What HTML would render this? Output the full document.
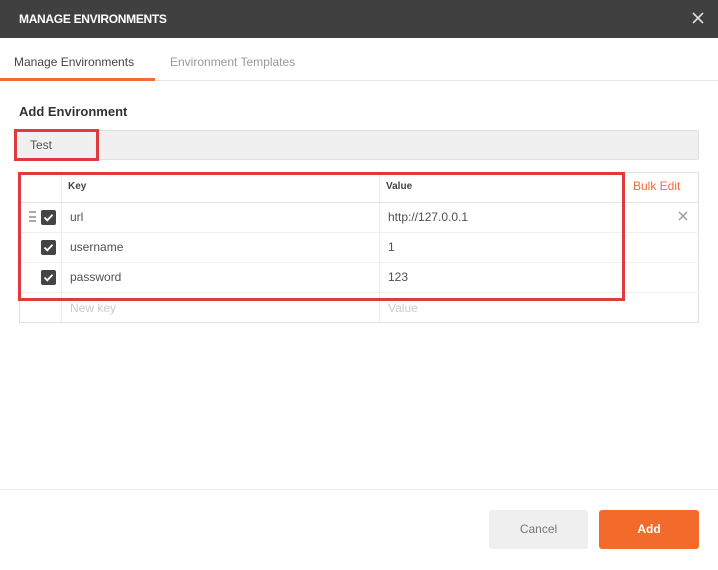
<!DOCTYPE html>
<html><head><meta charset="utf-8"><style>
*{box-sizing:border-box;margin:0;padding:0}
body{width:718px;height:570px;background:#fff;font-family:"Liberation Sans",sans-serif;position:relative;overflow:hidden;font-size:12px;color:#505050}
.a{position:absolute}
.hdr{left:0;top:0;width:718px;height:38px;background:#404040;color:#fff;font-size:12px;font-weight:bold;line-height:38px;padding-left:19px;letter-spacing:-0.3px}
.cell{font-size:12px;color:#505050}
.hl{height:1px;background:#e3e3e3}
.vl{width:1px;background:#ececec}
</style></head><body>
<div class="a hdr">MANAGE ENVIRONMENTS</div>
<svg class="a" style="left:691px;top:11px" width="14" height="14"><path d="M2 2L12 12M12 2L2 12" stroke="#ddd" stroke-width="1.6"/></svg>
<div class="a" style="left:14px;top:55px;font-size:12px;color:#444">Manage Environments</div>
<div class="a" style="left:170px;top:55px;font-size:12px;color:#999">Environment Templates</div>
<div class="a" style="left:0;top:80px;width:718px;height:1px;background:#e3e3e3"></div>
<div class="a" style="left:0;top:78px;width:155px;height:3px;background:#f26b3a"></div>
<div class="a" style="left:19px;top:104px;font-size:13px;font-weight:bold;color:#333">Add Environment</div>
<div class="a" style="left:14px;top:130px;width:685px;height:30px;background:#f0f0f0;border:1px solid #e0e0e0;border-radius:2px"></div>
<div class="a" style="left:30px;top:138px;color:#555">Test</div>
<div class="a" style="left:14px;top:129px;width:85px;height:32px;border:3px solid #e0393e"></div>
<div class="a" style="left:19px;top:172px;width:680px;height:151px;border:1px solid #e0e0e0"></div>
<div class="a vl" style="left:61px;top:172px;height:150px"></div>
<div class="a vl" style="left:379px;top:172px;height:150px"></div>
<div class="a hl" style="left:19px;top:202px;width:680px"></div>
<div class="a hl" style="left:19px;top:232px;width:680px;background:#f0f0f0"></div>
<div class="a hl" style="left:19px;top:262px;width:680px;background:#f0f0f0"></div>
<div class="a hl" style="left:19px;top:292px;width:680px;background:#f0f0f0"></div>
<div class="a" style="left:68px;top:181px;font-size:10px;font-weight:bold;color:#444">Key</div>
<div class="a" style="left:386px;top:181px;font-size:10px;font-weight:bold;color:#444">Value</div>
<div class="a" style="left:633px;top:179px;color:#f26b3a">Bulk Edit</div>
<div class="a" style="left:29px;top:211px;width:7px;height:11px;border-top:2px solid #aaa;border-bottom:2px solid #aaa"><div style="margin-top:2.5px;height:2px;background:#aaa"></div></div>
<svg class="a" style="left:41px;top:210px" width="15" height="15"><rect width="15" height="15" rx="2" fill="#444"/><path d="M3.5 7.5L6.3 10.3L11.5 4.8" stroke="#fff" stroke-width="1.8" fill="none"/></svg>
<svg class="a" style="left:41px;top:240px" width="15" height="15"><rect width="15" height="15" rx="2" fill="#444"/><path d="M3.5 7.5L6.3 10.3L11.5 4.8" stroke="#fff" stroke-width="1.8" fill="none"/></svg>
<svg class="a" style="left:41px;top:270px" width="15" height="15"><rect width="15" height="15" rx="2" fill="#444"/><path d="M3.5 7.5L6.3 10.3L11.5 4.8" stroke="#fff" stroke-width="1.8" fill="none"/></svg>
<div class="a cell" style="left:70px;top:210px">url</div>
<div class="a cell" style="left:70px;top:240px">username</div>
<div class="a cell" style="left:70px;top:270px">password</div>
<div class="a cell" style="left:388px;top:210px">http://127.0.0.1</div>
<div class="a cell" style="left:388px;top:240px">1</div>
<div class="a cell" style="left:388px;top:270px">123</div>
<div class="a cell" style="left:70px;top:301px;color:#ccc">New key</div>
<div class="a cell" style="left:388px;top:301px;color:#ccc">Value</div>
<svg class="a" style="left:678px;top:211px" width="10" height="10"><path d="M1 1L9 9M9 1L1 9" stroke="#999" stroke-width="1.4"/></svg>
<div class="a" style="left:18px;top:172px;width:607px;height:129px;border:3px solid #e0393e"></div>
<div class="a" style="left:0;top:489px;width:718px;height:1px;background:#ececec"></div>
<div class="a" style="left:489px;top:510px;width:99px;height:39px;background:#efefef;border-radius:3px;color:#777;font-size:12px;line-height:39px;text-align:center">Cancel</div>
<div class="a" style="left:599px;top:510px;width:100px;height:39px;background:#f26b2a;border-radius:3px;color:#fff;font-size:12px;font-weight:bold;line-height:39px;text-align:center">Add</div>
</body></html>
